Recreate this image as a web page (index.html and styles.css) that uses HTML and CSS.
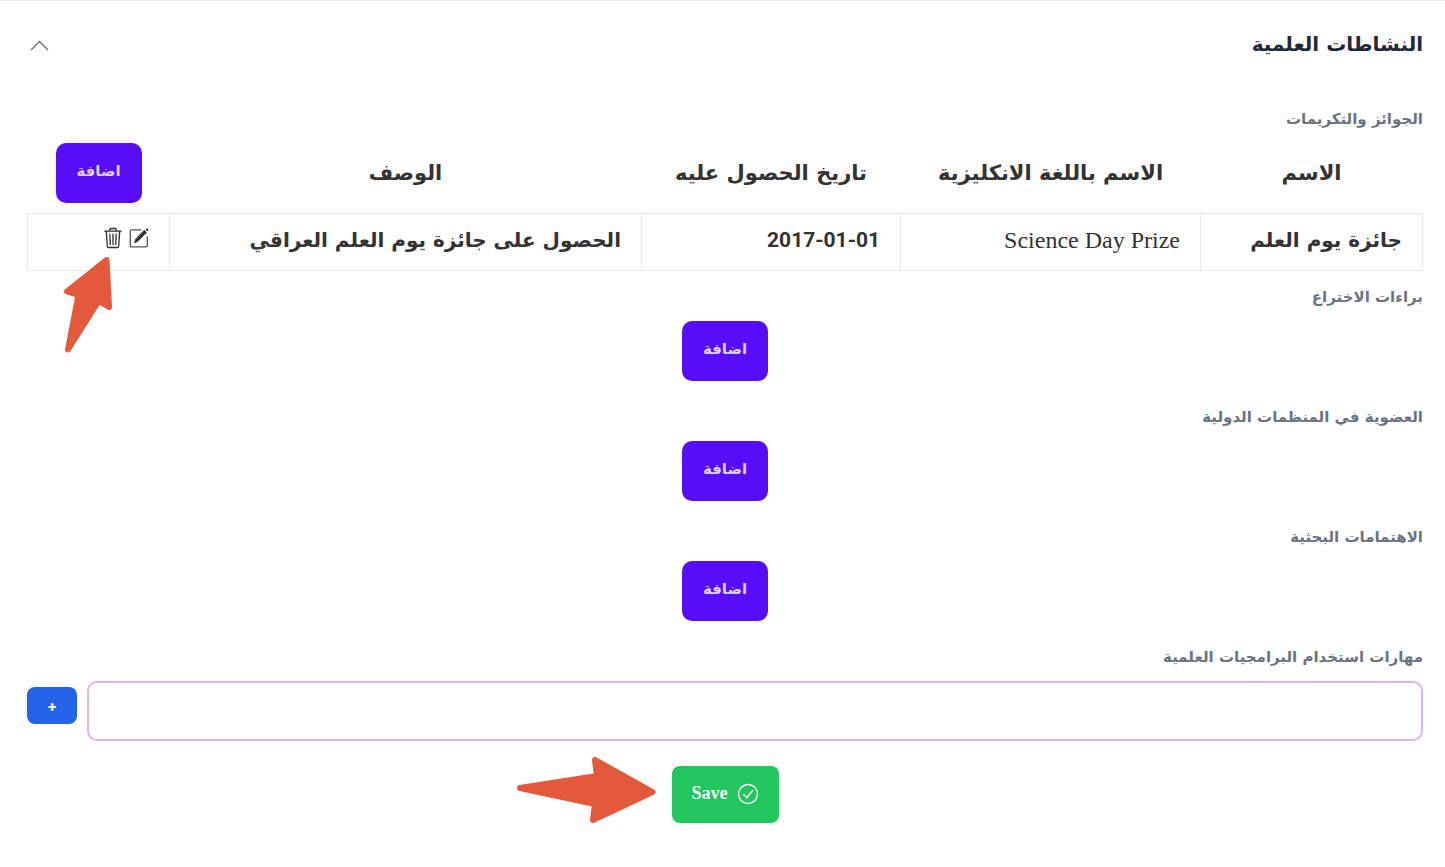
FILE: index.html
```html
<!DOCTYPE html>
<html lang="ar" dir="rtl">
<head>
<meta charset="utf-8">
<meta name="viewport" content="width=device-width, initial-scale=1">
<title>النشاطات العلمية</title>
<link rel="stylesheet" href="styles.css">
</head>
<body>
<main class="panel">
  <header class="panel-header">
    <h1 class="panel-title">النشاطات العلمية</h1>
    <button class="icon-button" type="button" aria-label="طي القسم" aria-expanded="true">
      <svg class="chevron" viewBox="0 0 24 24" width="24" height="24" fill="none" stroke="#6b7280" stroke-width="1.4"><path d="M4 18 12.500 9.500 21 18"/></svg>
    </button>
  </header>

  <section class="group">
    <h2 class="label">الجوائز والتكريمات</h2>
    <table class="awards">
      <colgroup>
        <col class="col-name"><col class="col-english"><col class="col-date"><col class="col-description"><col class="col-actions">
      </colgroup>
      <thead>
        <tr>
          <th scope="col">الاسم</th>
          <th scope="col">الاسم باللغة الانكليزية</th>
          <th scope="col">تاريخ الحصول عليه</th>
          <th scope="col">الوصف</th>
          <th><button class="add-button" type="button">اضافة</button></th>
        </tr>
      </thead>
      <tbody>
        <tr>
          <td>جائزة يوم العلم</td>
          <td class="english">Science Day Prize</td>
          <td class="date"><span dir="ltr">2017-01-01</span></td>
          <td>الحصول على جائزة يوم العلم العراقي</td>
          <td>
            <div class="actions">
              <button class="icon-button" type="button" aria-label="تعديل">
                <svg viewBox="0 0 20 22" width="20" height="22" fill="none" stroke="#333" stroke-width="1.300" stroke-linecap="round" stroke-linejoin="round"><path d="M12 2.800H2.700a1.400 1.400 0 0 0-1.400 1.400v14.200a1.400 1.400 0 0 0 1.400 1.400h14.200a1.400 1.400 0 0 0 1.400-1.400V10" stroke="#555"/><path d="M5.700 15.500l1-3.600L15.300 3.300l2.200 2.200-8.600 8.700z" fill="#333" stroke-width=".8"/><path d="M17.400 2.700l.7-.7.800.8-.7.700z" fill="#333" stroke-width="1.200"/></svg>
              </button>
              <button class="icon-button" type="button" aria-label="حذف">
                <svg viewBox="0 0 20 22" width="20" height="22" fill="none" stroke="#333" stroke-width="1.300" stroke-linecap="round" stroke-linejoin="round"><path d="M1.800 4.200h16.400M6.800 4V2.500a1 1 0 0 1 1-1h4.400a1 1 0 0 1 1 1V4M3.300 4.400l1 14.800a1.400 1.400 0 0 0 1.400 1.300h8.600a1.400 1.400 0 0 0 1.400-1.300l1-14.800"/><path d="M6.800 7.200l.5 10.300M10 7.200v10.300M13.200 7.200l-.5 10.300"/></svg>
              </button>
              <svg class="pointer-up" viewBox="0 0 50 98" width="50" height="98" fill="#e2593b" stroke="#e2593b" stroke-width="6" stroke-linejoin="round" aria-hidden="true"><path d="M43.500 4 4 35.500l11.500 3.500L5 93.500 35.500 45l10.500 6z"/></svg>
            </div>
          </td>
        </tr>
      </tbody>
    </table>
  </section>

  <section class="group">
    <h2 class="label">براءات الاختراع</h2>
    <button class="add-button" type="button">اضافة</button>
  </section>
  <section class="group">
    <h2 class="label">العضوية في المنظمات الدولية</h2>
    <button class="add-button" type="button">اضافة</button>
  </section>
  <section class="group">
    <h2 class="label">الاهتمامات البحثية</h2>
    <button class="add-button" type="button">اضافة</button>
  </section>

  <section class="group skills">
    <label class="label" for="skills">مهارات استخدام البرامجيات العلمية</label>
    <div class="skill-row">
      <input class="skill-input" id="skills" type="text">
      <button class="plus-button" type="button">+</button>
    </div>
  </section>

  <footer class="footer">
    <div class="save-wrap">
      <button class="save-button" type="button">
        <svg viewBox="0 0 22 22" width="22" height="22" fill="none" stroke="#fff" stroke-width="1.300" stroke-linecap="round" stroke-linejoin="round"><circle cx="11" cy="11" r="9.500"/><path d="M6.800 11.500l3 3.200 5.600-7" stroke-width="1.500"/></svg>
        <span>Save</span>
      </button>
      <svg class="pointer-right" viewBox="0 0 140 68" width="140" height="68" fill="#e2593b" stroke="#e2593b" stroke-width="6" stroke-linejoin="round" aria-hidden="true"><path d="M136.500 36 79 4l2 16L4 32l75 16-2 16z"/></svg>
    </div>
  </footer>
</main>
</body>
</html>
```
FILE: styles.css
```css
* {
  box-sizing: border-box;
}

body {
  margin: 0;
  background: #fefefe;
  color: #333;
  font-family: "DejaVu Sans", sans-serif;
  font-weight: 700;
}

button {
  font: inherit;
  border: 0;
  cursor: pointer;
}

svg {
  display: block;
}

.panel {
  padding: 27px 22px 24px 27px;
  border-top: 1px solid #ebebeb;
}

.panel-header {
  display: flex;
  align-items: center;
  justify-content: space-between;
  height: 32px;
  margin-bottom: 47px;
}

.panel-title {
  margin: 0;
  color: #1f2937;
  font-size: 20px;
  line-height: 32px;
}

.icon-button {
  padding: 0;
  background: none;
}

.group {
  display: flex;
  flex-direction: column;
  align-items: center;
  margin-bottom: 24px;
}

.group:has(.awards) {
  margin-bottom: 14px;
}

.label {
  align-self: stretch;
  margin: 0 0 12px;
  color: #6b7280;
  font-size: 15px;
  line-height: 24px;
}

.awards {
  width: 100%;
  table-layout: fixed;
  border-collapse: collapse;
  font-size: 20px;
  line-height: 32px;
}

.col-name {
  width: 222px;
}

.col-english {
  width: 300px;
}

.col-date {
  width: 259px;
}

.col-actions {
  width: 142px;
}

.awards th {
  padding: 0 0 10px;
  font-size: 21px;
  white-space: nowrap;
}

.awards td {
  height: 57px;
  padding: 0 20px 4px;
  border: 1px solid #e5e7eb;
  white-space: nowrap;
}

.awards .english {
  font-family: "Liberation Serif", serif;
  font-size: 24px;
  font-weight: 400;
}

.awards .date {
  font-family: Roboto, sans-serif;
  font-size: 21px;
}

.actions {
  position: relative;
  display: flex;
  gap: 6px;
  padding-bottom: 4px;
}

.pointer-up {
  position: absolute;
  top: 29px;
  right: 36px;
}

.add-button {
  width: 86px;
  height: 60px;
  padding: 0 0 4px;
  border-radius: 10px;
  background: #570df8;
  color: #ddd0fe;
  font-size: 15px;
  line-height: 24px;
  vertical-align: top;
}

.skills {
  margin-bottom: 25px;
}

.skill-row {
  display: flex;
  align-self: stretch;
  align-items: flex-start;
  gap: 10px;
}

.skill-input {
  flex: 1;
  min-width: 0;
  height: 60px;
  padding: 0 16px;
  border: 2px solid #d8b4fe;
  border-radius: 10px;
  background: #fff;
  font: inherit;
}

.plus-button {
  width: 50px;
  height: 37px;
  margin-top: 6px;
  padding: 0;
  border-radius: 8px;
  background: #2563eb;
  color: #fff;
  font-family: Inter, sans-serif;
  font-size: 14px;
  font-weight: 900;
}

.footer {
  display: flex;
  justify-content: center;
}

.save-wrap {
  position: relative;
}

.save-button {
  display: flex;
  align-items: center;
  gap: 9px;
  height: 57px;
  padding: 0 20px 2px;
  border-radius: 8px;
  background: #22c55e;
  color: #fff;
  font-family: "Liberation Serif", serif;
  font-size: 18px;
}

.pointer-right {
  position: absolute;
  top: -10px;
  right: calc(100% + 16px);
}
```
